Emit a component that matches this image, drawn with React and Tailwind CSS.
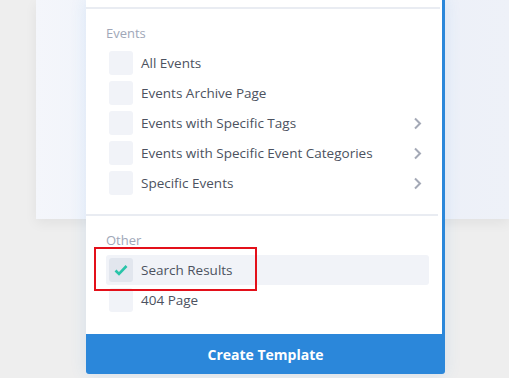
import React from "react";

const EVENTS = [
  { label: "All Events" },
  { label: "Events Archive Page" },
  { label: "Events with Specific Tags", more: true },
  { label: "Events with Specific Event Categories", more: true },
  { label: "Specific Events", more: true },
];

function Chevron() {
  return (
    <svg width="9" height="13" viewBox="0 0 9 13" className="text-[#a4a9b6]">
      <path d="M2 1.5l5 5-5 5" fill="none" stroke="currentColor" strokeWidth="2" />
    </svg>
  );
}

function Row({ label, more, checked }) {
  return (
    <div
      className={
        "flex h-[30px] items-center rounded-[3px] pl-[3px] pr-[7px] " +
        (checked ? "bg-[#f1f3f8]" : "")
      }
    >
      <span
        className={
          "flex h-6 w-6 items-center justify-center rounded-[3px] " +
          (checked ? "bg-[#e2e6ee]" : "bg-[#f1f3f8]")
        }
      >
        {checked && (
          <svg width="14" height="12" viewBox="0 0 14 12">
            <path d="M1.5 6.5l3.5 3.5 7.5-8" fill="none" stroke="#29c4a9" strokeWidth="2.6" />
          </svg>
        )}
      </span>
      <span className="ml-2 flex-1 text-[13.5px] leading-[18px] text-[#4c5260]">{label}</span>
      {more && <Chevron />}
    </div>
  );
}

export default function App() {
  return (
    <div
      className="relative h-[378px] w-[509px] overflow-hidden bg-[#eeeeee]"
      style={{ fontFamily: '"Open Sans", "Noto Sans", sans-serif' }}
    >
      {/* page behind the modal */}
      <div className="absolute left-[36px] top-0 h-[219px] w-[473px] bg-gradient-to-r from-[#f4f6fb] via-[#e9eef8] to-[#eef1f8] shadow-[0_4px_12px_rgba(0,0,0,0.06)]" />

      {/* modal */}
      <div className="absolute left-[86px] top-0 w-[359px] shadow-[0_0_16px_rgba(43,135,218,0.12)]">
        <div className="border-r-[3px] border-[#2b87da] bg-white pt-[7px]">
          <div className="mr-[2px] h-[2px] bg-[#e9ecf2]" />
          <div className="pl-5 pr-[13px] pt-[15px] pb-[16px]">
            <div className="mb-[6px] text-[13px] leading-[18px] text-[#a0a7b8]">Events</div>
            {EVENTS.map((e) => (
              <Row key={e.label} {...e} />
            ))}
          </div>
          <div className="mr-[4px] h-[2px] bg-[#e9ecf2]" />
          <div className="pl-5 pr-[13px] pt-[15px] pb-[19px]">
            <div className="mb-[6px] text-[13px] leading-[18px] text-[#a0a7b8]">Other</div>
            <div className="relative">
              <Row label="Search Results" checked />
              <div className="absolute left-[-12px] top-[-8px] h-[44px] w-[163px] border-2 border-[#e3101a]" />
            </div>
            <Row label="404 Page" />
          </div>
        </div>
        <button className="flex h-10 w-full items-center justify-center rounded-b-[3px] bg-[#2b87da] text-[14px] font-bold text-white">
          Create Template
        </button>
      </div>
    </div>
  );
}
